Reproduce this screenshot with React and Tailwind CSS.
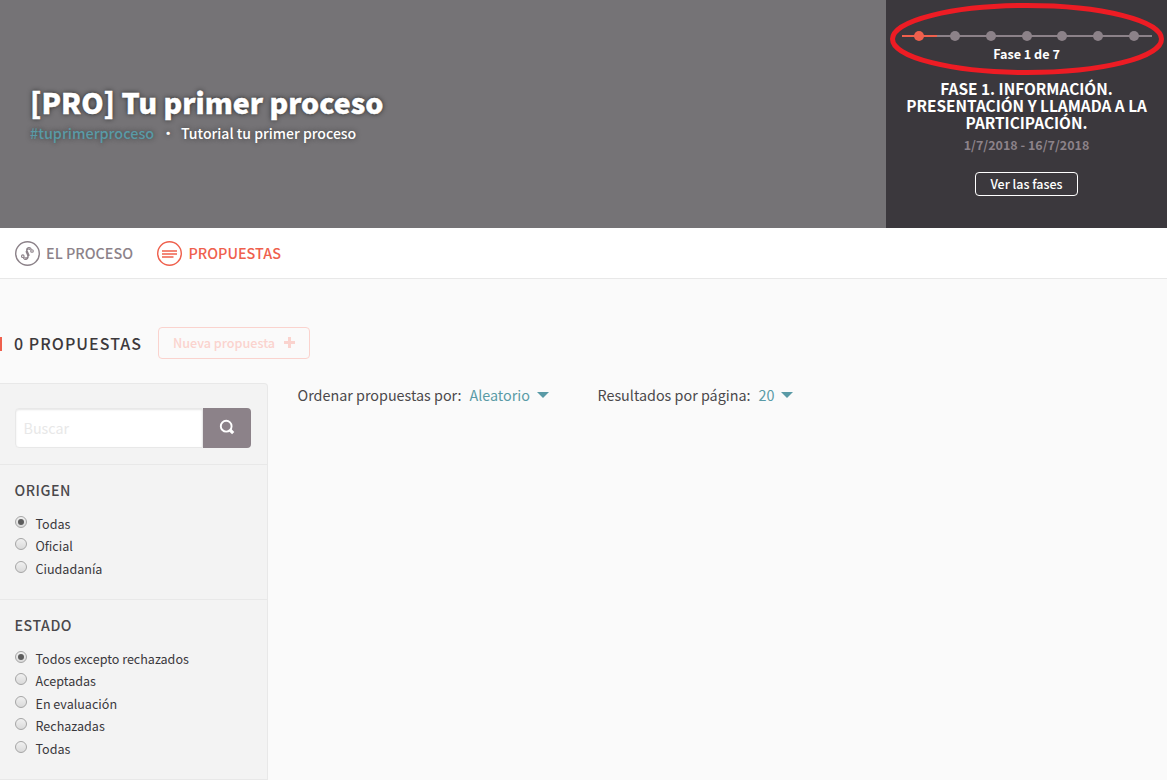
const radios = {
  origen: ['Todas', 'Oficial', 'Ciudadanía'],
  estado: ['Todos excepto rechazados', 'Aceptadas', 'En evaluación', 'Rechazadas', 'Todas'],
};

function Radio({ label, checked }) {
  return (
    <label className="flex h-[22.4px] items-center gap-[8.5px] text-[12.55px] leading-[22px] text-[#3a383c]">
      <span className="mb-[4px] flex size-[12px] shrink-0 items-center justify-center rounded-full border border-[#a5a5a5] bg-linear-to-b from-[#f0f0f0] to-[#dadada]">
        {checked && <span className="size-[6px] rounded-full bg-[#5c5c5c]" />}
      </span>
      {label}
    </label>
  );
}

function FilterGroup({ title, items }) {
  return (
    <section className="h-[135px] border-t border-[#e8e8e8] px-[15px] pt-[13px] last:h-[180px]">
      <h3 className="ml-[-0.5px] text-[14.2px] font-medium leading-[24px] tracking-[0.55px] text-[#4a484b]">{title}</h3>
      <div className="mt-[10.8px]">
        {items.map((item, i) => (
          <Radio key={item} label={item} checked={i === 0} />
        ))}
      </div>
    </section>
  );
}

function PhaseTrack() {
  return (
    <svg className="absolute left-0 top-0" width="281" height="80" viewBox="886 0 281 80">
      <path d="M902 36H1152" stroke="#8c8289" strokeWidth="2" />
      <path d="M902 36H937" stroke="#ef604d" strokeWidth="2" />
      {[919, 955, 991, 1027, 1062, 1098, 1134].map((x, i) => (
        <circle key={x} cx={x} cy="36" r="5" fill={i === 0 ? '#ef604d' : '#8c8289'} />
      ))}
      <ellipse cx="1027" cy="39" rx="134.5" ry="33.5" fill="none" stroke="#ed1c24" strokeWidth="5" />
    </svg>
  );
}

function Caret() {
  return (
    <svg width="12" height="6" viewBox="0 0 12 6" className="ml-[7px]">
      <path d="M0 0H12L6 6Z" fill="#599aa6" />
    </svg>
  );
}

export default function App() {
  return (
    <div className="flex h-[780px] w-[1167px] flex-col overflow-hidden bg-[#fafafa] font-['Noto_Sans_CJK_SC','Noto_Sans',sans-serif] text-[#3d393c]">
      <header className="flex h-[228px] shrink-0 bg-[#757376] text-white">
        <div className="w-[886px] pl-[30px] pt-[83px]">
          <h1 className="font-['Noto_Sans_CJK_SC_Black','Noto_Sans_CJK_SC',sans-serif] text-[28.5px] font-black leading-[38px] whitespace-nowrap [text-shadow:0_0_5px_#222222] [-webkit-text-stroke:0.4px_white]">[PRO] Tu primer proceso</h1>
          <p className="mt-px flex text-[14.3px] font-medium leading-[22px] [text-shadow:0_0_5px_#222222aa]">
            <span className="w-[131px] text-[14.4px] text-[#599aa6]">#tuprimerproceso</span>
            <span className="w-[20px]">·</span>
            <span className="text-[14.05px]">Tutorial tu primer proceso</span>
          </p>
        </div>
        <div className="relative flex flex-1 flex-col items-center bg-[#3b383d] pt-[44px] text-center">
          <PhaseTrack />
          <p className="text-[12.6px] font-bold leading-[19px]">Fase 1 de 7</p>
          <h2 className="mt-[17px] text-[15.4px] font-bold leading-[17px] whitespace-nowrap">
            FASE 1. INFORMACIÓN.<br />PRESENTACIÓN Y LLAMADA A LA<br />PARTICIPACIÓN.
          </h2>
          <p className="mt-[4px] text-[12.5px] font-bold leading-[20px] text-[#8c8289]">1/7/2018 - 16/7/2018</p>
          <button className="mt-[17px] h-[24px] w-[103px] rounded-[4px] border border-white text-[12.5px] font-medium leading-[22px]">Ver las fases</button>
        </div>
      </header>

      <nav className="flex h-[51px] shrink-0 items-center border-b border-[#e8e8e8] bg-white pl-[15px] text-[14.4px] font-medium text-[#8c8289]">
        <svg width="25" height="25" viewBox="0 0 25 25" fill="none" stroke="currentColor">
          <circle cx="12.5" cy="12.5" r="11.8" strokeWidth="1.4" />
          <path d="M12.2 11.5C10 6.5 15.2 5 16.4 8.6M12.2 11.5C10.5 8 14.8 7 15 9M12.6 13.5C15 18.5 9 20 8.2 16.4M12.6 13.5C14.2 17 10 18 9.6 16" strokeWidth="1.1" />
          <path d="M11.5 10L13.7 15" strokeWidth="2.4" />
          <circle cx="17" cy="10" r="1.3" strokeWidth="1.1" />
          <circle cx="7.8" cy="15.2" r="1.3" strokeWidth="1.1" />
        </svg>
        <span className="ml-[6px] w-[111px]">EL PROCESO</span>
        <svg className="text-[#ef604d]" width="25" height="25" viewBox="0 0 25 25" fill="none" stroke="currentColor">
          <circle cx="12.5" cy="12.5" r="11.8" strokeWidth="1.4" />
          <path d="M5 10H20M5 13H20M5 16H16.5" strokeWidth="1.6" />
        </svg>
        <span className="ml-[6.5px] text-[#ef604d]">PROPUESTAS</span>
      </nav>

      <main className="flex flex-1 flex-col">
        <div className="mt-[48px] flex h-[32px] items-center">
          <span className="mt-[2px] h-[14px] w-[2px] bg-[#ef604d]" />
          <h2 className="ml-[12px] w-[144px] text-[16px] font-medium leading-[28px] tracking-[1.05px] whitespace-nowrap">0 PROPUESTAS</h2>
          <button className="flex h-[32px] w-[152px] items-center rounded-[4px] border border-[#fad3ce] pl-[14px] text-[12.6px] font-medium text-[#fad3ce]">
            <span className="w-[111px] text-left leading-[30px]">Nueva propuesta</span>
            <svg className="mb-px" width="11" height="11" viewBox="0 0 11 11"><path d="M5.5 0V11M0 5.5H11" stroke="currentColor" strokeWidth="3" /></svg>
          </button>
        </div>

        <div className="mt-[24px] flex">
          <aside className="h-[397px] w-[268px] rounded-tr-[4px] border border-l-0 border-[#e8e8e8] bg-[#f3f3f3]">
            <div className="flex h-[80px] pl-[15px] pt-[24px]">
              <input placeholder="Buscar" className="h-[40px] w-[188px] rounded-l-[4px] border border-[#e8e8e8] bg-white px-[7.5px] pb-[2px] text-[14.3px] shadow-[inset_0_1px_2px_#0000001a] placeholder:text-[#e8e8e8]" />
              <button className="flex h-[40px] w-[48px] items-center justify-center rounded-r-[4px] bg-[#8c8289] text-white">
                <svg className="mb-[2px]" width="16" height="16" viewBox="0 0 16 16" fill="none" stroke="currentColor">
                  <circle cx="7.2" cy="7.2" r="5.4" strokeWidth="1.9" />
                  <path d="M11 11L14.2 14.2" strokeWidth="3.2" />
                </svg>
              </button>
            </div>
            <FilterGroup title="ORIGEN" items={radios.origen} />
            <FilterGroup title="ESTADO" items={radios.estado} />
          </aside>
          <div className="flex h-[24px] items-center pl-[29.5px] text-[14.35px] leading-[24px] text-[#4a484b]">
            <span className="w-[172px] whitespace-nowrap">Ordenar propuestas por:</span>
            <span className="flex w-[128px] items-center text-[#599aa6]">Aleatorio<Caret /></span>
            <span className="w-[161px] whitespace-nowrap">Resultados por página:</span>
            <span className="flex items-center text-[#599aa6]">20<Caret /></span>
          </div>
        </div>
      </main>
    </div>
  );
}
